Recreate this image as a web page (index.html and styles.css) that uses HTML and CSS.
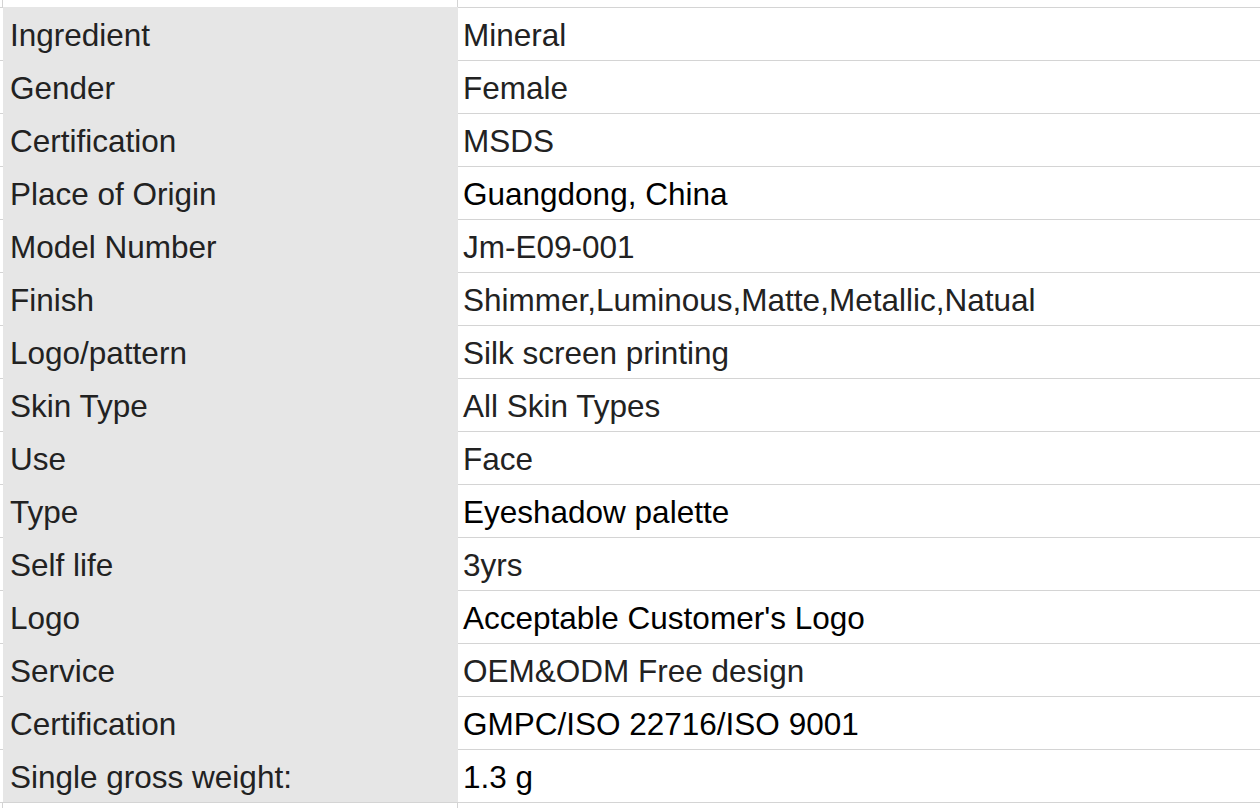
FILE: index.html
```html
<!DOCTYPE html>
<html>
<head>
<meta charset="utf-8">
<link rel="stylesheet" href="styles.css">
</head>
<body>
<div class="sheet">
  <div class="row edge top"><div class="c0"></div><div class="c1"></div><div class="c2"></div></div>
  <div class="row"><div class="c0"></div><div class="c1">Ingredient</div><div class="c2">Mineral</div></div>
  <div class="row"><div class="c0"></div><div class="c1">Gender</div><div class="c2">Female</div></div>
  <div class="row"><div class="c0"></div><div class="c1">Certification</div><div class="c2">MSDS</div></div>
  <div class="row"><div class="c0"></div><div class="c1">Place of Origin</div><div class="c2 dark">Guangdong, China</div></div>
  <div class="row"><div class="c0"></div><div class="c1">Model Number</div><div class="c2">Jm-E09-001</div></div>
  <div class="row"><div class="c0"></div><div class="c1">Finish</div><div class="c2">Shimmer,Luminous,Matte,Metallic,Natual</div></div>
  <div class="row"><div class="c0"></div><div class="c1">Logo/pattern</div><div class="c2">Silk screen printing</div></div>
  <div class="row"><div class="c0"></div><div class="c1">Skin Type</div><div class="c2">All Skin Types</div></div>
  <div class="row"><div class="c0"></div><div class="c1">Use</div><div class="c2">Face</div></div>
  <div class="row"><div class="c0"></div><div class="c1">Type</div><div class="c2 dark">Eyeshadow palette</div></div>
  <div class="row"><div class="c0"></div><div class="c1">Self life</div><div class="c2">3yrs</div></div>
  <div class="row"><div class="c0"></div><div class="c1">Logo</div><div class="c2 dark">Acceptable Customer's Logo</div></div>
  <div class="row"><div class="c0"></div><div class="c1">Service</div><div class="c2">OEM&amp;ODM Free design</div></div>
  <div class="row"><div class="c0"></div><div class="c1">Certification</div><div class="c2 dark">GMPC/ISO 22716/ISO 9001</div></div>
  <div class="row"><div class="c0"></div><div class="c1">Single gross weight:</div><div class="c2 dark">1.3 g</div></div>
  <div class="row edge bottom"><div class="c0"></div><div class="c1"></div><div class="c2"></div></div>
</div>
</body>
</html>
```
FILE: styles.css
```css
html, body {
  margin: 0;
  padding: 0;
  background: #ffffff;
}
body {
  font-family: "Liberation Sans", Arial, sans-serif;
  font-size: 31.5px;
  line-height: 34px;
  color: #222222;
  overflow: hidden;
}
.sheet {
  display: flex;
  flex-direction: column;
  width: 1260px;
}
.row {
  display: flex;
  height: 53px;
  box-sizing: border-box;
}
.row > div {
  box-sizing: border-box;
}
.c0 {
  width: 3px;
  flex: none;
  border-top: 1px solid #d4d4d4;
}
.c1 {
  width: 455px;
  flex: none;
  background: #e6e6e6;
  padding: 11px 0 0 7px;
  white-space: nowrap;
}
.c2 {
  flex: 1;
  border-top: 1px solid #d4d4d4;
  padding: 10px 0 0 5px;
  white-space: nowrap;
}
.dark {
  color: #000000;
}
.edge .c0 {
  border-top: none;
  border-right: 1px solid #d4d4d4;
}
.edge .c1 {
  background: #ffffff;
  border-right: 1px solid #d4d4d4;
  padding: 0;
}
.edge .c2 {
  padding: 0;
}
.edge.top {
  height: 7px;
}
.edge.top .c2 {
  border-top: none;
}
.edge.bottom {
  height: 6px;
}
.edge.bottom .c0,
.edge.bottom .c1,
.edge.bottom .c2 {
  border-top: 1px solid #d4d4d4;
}
```
